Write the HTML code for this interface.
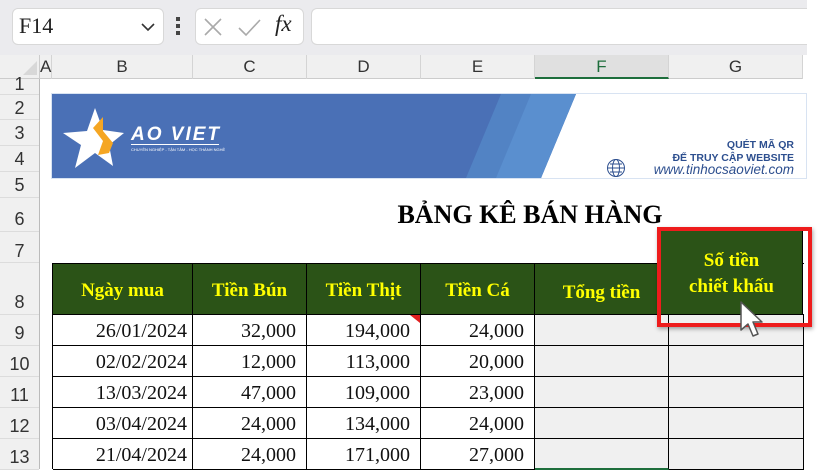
<!DOCTYPE html>
<html><head><meta charset="utf-8"><style>
*{margin:0;padding:0;box-sizing:border-box}
body{width:820px;height:469px;overflow:hidden;background:#fff;position:relative;font-family:"Liberation Sans",sans-serif}
.a{position:absolute}
.rh{position:absolute;left:0;width:39px;text-align:center;color:#333;font-size:18px;border-bottom:1px solid #dcdcdc;background:#f0f0f0}
.ch{position:absolute;top:55px;height:24px;text-align:center;font-size:17px;color:#333;line-height:24px;border-right:1px solid #d4d4d4}
.c{position:absolute;font-family:"Liberation Serif",serif;font-size:20px;color:#111;text-align:right;padding-right:10px;border-right:1px solid #000;border-bottom:1px solid #000;line-height:33px}
.h{position:absolute;background:#2b5317;color:#ffff00;font-family:"Liberation Serif",serif;font-weight:bold;font-size:19px;text-align:center;border-right:1px solid #000}
</style></head><body>
<div class="a" style="left:0;top:0;width:820px;height:55px;background:#ebebee"></div>
<div class="a" style="left:12px;top:8px;width:152px;height:37px;background:#fff;border:1px solid #d8d8d8;border-radius:6px"></div>
<div class="a" style="left:19px;top:13px;font-family:'Liberation Serif',serif;font-size:22px;color:#222">F14</div>
<svg class="a" style="left:141px;top:22px" width="14" height="10"><path d="M1 2 L7 8 L13 2" stroke="#333" stroke-width="1.6" fill="none"/></svg>
<div class="a" style="left:176px;top:17px;width:4px;height:4px;background:#444"></div>
<div class="a" style="left:176px;top:24px;width:4px;height:4px;background:#444"></div>
<div class="a" style="left:176px;top:31px;width:4px;height:4px;background:#444"></div>
<div class="a" style="left:195px;top:8px;width:109px;height:37px;background:#fff;border:1px solid #d8d8d8;border-radius:6px"></div>
<svg class="a" style="left:203px;top:16px" width="60" height="22"><path d="M2 3 L18 19 M18 3 L2 19" stroke="#aaa" stroke-width="1.6"/><path d="M36 12 L43 19 L57 4" stroke="#aaa" stroke-width="1.6" fill="none"/></svg>
<div class="a" style="left:275px;top:11px;font-family:'Liberation Serif',serif;font-style:italic;font-size:23px;color:#222">fx</div>
<div class="a" style="left:311px;top:8px;width:509px;height:37px;background:#fff;border:1px solid #d8d8d8;border-right:none;border-radius:6px 0 0 6px"></div>
<div class="a" style="left:807px;top:0;width:13px;height:55px;background:#fff"></div>
<div class="a" style="left:0;top:55px;width:807px;height:24px;background:#f0f0f0;border-bottom:1px solid #ccc"></div>
<svg class="a" style="left:22px;top:60px" width="16" height="16"><path d="M15 1 L15 15 L1 15 Z" fill="#d8d8d8"/></svg>
<div class="ch" style="left:39px;width:13px;border-left:1px solid #ccc">A</div>
<div class="ch" style="left:52px;width:141px">B</div>
<div class="ch" style="left:193px;width:114px">C</div>
<div class="ch" style="left:307px;width:114px">D</div>
<div class="ch" style="left:421px;width:114px">E</div>
<div class="ch" style="left:535px;width:134px;background:#e0e0e0;color:#1e6e3c;border-bottom:2px solid #1e6e3c">F</div>
<div class="ch" style="left:669px;width:134px">G</div>
<div class="a" style="left:803px;top:55px;width:17px;height:414px;background:#fff"></div>
<div class="a" style="left:39px;top:79px;width:1px;height:390px;background:#bbb"></div>
<div class="rh" style="top:79px;height:16px;line-height:10px">1</div>
<div class="rh" style="top:95px;height:25px;line-height:26px">2</div>
<div class="rh" style="top:120px;height:26px;line-height:26px">3</div>
<div class="rh" style="top:146px;height:26px;line-height:26px">4</div>
<div class="rh" style="top:172px;height:26px;line-height:26px">5</div>
<div class="rh" style="top:198px;height:34px;line-height:42px">6</div>
<div class="rh" style="top:232px;height:31px;line-height:38px">7</div>
<div class="rh" style="top:263px;height:52px;line-height:78px">8</div>
<div class="rh" style="top:315px;height:31px;line-height:36px">9</div>
<div class="rh" style="top:346px;height:31px;line-height:36px">10</div>
<div class="rh" style="top:377px;height:31px;line-height:36px">11</div>
<div class="rh" style="top:408px;height:31px;line-height:36px">12</div>
<div class="rh" style="top:439px;height:31px;line-height:36px">13</div>
<svg class="a" style="left:51px;top:93px" width="756" height="86">
<rect x="0" y="0" width="756" height="86" fill="#d8e3f2"/>
<rect x="1" y="1" width="754" height="84" fill="#fff"/>
<polygon points="1,1 525,1 490,85 1,85" fill="#4a70b6"/>
<polygon points="450,1 525,1 490,85 415,85" fill="#5283c4"/>
<polygon points="480,1 525,1 490,85 445,85" fill="#5a8fcf"/>
<polygon points="44,15 52,37 73,40 58,52 62,73 44,60 24,75 30,52 12,40 36,38" fill="#fff"/>
<path d="M52,24 L42,35 L52,48 L47,62 L58,60 L62,50 L52,38 Z" fill="#f5a623"/>
<text x="80" y="47" font-family="Liberation Sans" font-weight="bold" font-style="italic" font-size="19" fill="#fff" letter-spacing="2">AO VIET</text>
<rect x="80" y="51" width="88" height="1" fill="#fff"/>
<text x="80" y="58" font-family="Liberation Sans" font-size="4" fill="#fff">CHUYÊN NGHIỆP - TẬN TÂM - HỌC THÀNH NGHỀ</text>
<text x="743" y="55" text-anchor="end" font-family="Liberation Sans" font-weight="bold" font-size="10.5" fill="#2d4f8f">QUÉT MÃ QR</text>
<text x="743" y="68" text-anchor="end" font-family="Liberation Sans" font-weight="bold" font-size="10.5" fill="#2d4f8f">ĐỂ TRUY CẬP WEBSITE</text>
<text x="743" y="81" text-anchor="end" font-family="Liberation Sans" font-style="italic" font-size="13.5" fill="#2d4f8f">www.tinhocsaoviet.com</text>
<circle cx="565" cy="75" r="8.5" fill="none" stroke="#2d4f8f" stroke-width="1"/>
<ellipse cx="565" cy="75" rx="3.5" ry="8.5" fill="none" stroke="#2d4f8f" stroke-width="1"/>
<path d="M557 75 H573 M559 71 H571 M559 79 H571" stroke="#2d4f8f" stroke-width="1"/>
</svg>
<div class="a" style="left:280px;top:200px;width:500px;text-align:center;font-family:'Liberation Serif',serif;font-weight:bold;font-size:26px;color:#000">BẢNG KÊ BÁN HÀNG</div>
<div class="a" style="left:52px;top:263px;width:752px;height:1px;background:#000"></div>
<div class="a" style="left:52px;top:263px;width:1px;height:206px;background:#000"></div>
<div class="h" style="left:53px;top:264px;width:140px;height:51px;line-height:54px">Ngày mua</div>
<div class="h" style="left:193px;top:264px;width:114px;height:51px;line-height:54px">Tiền Bún</div>
<div class="h" style="left:307px;top:264px;width:114px;height:51px;line-height:54px">Tiền Thịt</div>
<div class="h" style="left:421px;top:264px;width:114px;height:51px;line-height:54px">Tiền Cá</div>
<div class="h" style="left:535px;top:264px;width:134px;height:51px;line-height:58px">Tổng tiền</div>
<div class="h" style="left:661px;top:231px;width:142px;height:84px;line-height:26px;padding-top:17px;border-right:1px solid #000">Số tiền<br>chiết khấu</div>
<div class="a" style="left:52px;top:314px;width:752px;height:1px;background:#000"></div>
<div class="c" style="left:53px;top:315px;width:140px;height:31px;padding-right:5px">26/01/2024</div>
<div class="c" style="left:193px;top:315px;width:114px;height:31px">32,000</div>
<div class="c" style="left:307px;top:315px;width:114px;height:31px">194,000</div>
<div class="c" style="left:421px;top:315px;width:114px;height:31px">24,000</div>
<div class="c" style="left:53px;top:346px;width:140px;height:31px;padding-right:5px">02/02/2024</div>
<div class="c" style="left:193px;top:346px;width:114px;height:31px">12,000</div>
<div class="c" style="left:307px;top:346px;width:114px;height:31px">113,000</div>
<div class="c" style="left:421px;top:346px;width:114px;height:31px">20,000</div>
<div class="c" style="left:53px;top:377px;width:140px;height:31px;padding-right:5px">13/03/2024</div>
<div class="c" style="left:193px;top:377px;width:114px;height:31px">47,000</div>
<div class="c" style="left:307px;top:377px;width:114px;height:31px">109,000</div>
<div class="c" style="left:421px;top:377px;width:114px;height:31px">23,000</div>
<div class="c" style="left:53px;top:408px;width:140px;height:31px;padding-right:5px">03/04/2024</div>
<div class="c" style="left:193px;top:408px;width:114px;height:31px">24,000</div>
<div class="c" style="left:307px;top:408px;width:114px;height:31px">134,000</div>
<div class="c" style="left:421px;top:408px;width:114px;height:31px">24,000</div>
<div class="c" style="left:53px;top:439px;width:140px;height:31px;padding-right:5px">21/04/2024</div>
<div class="c" style="left:193px;top:439px;width:114px;height:31px">24,000</div>
<div class="c" style="left:307px;top:439px;width:114px;height:31px">171,000</div>
<div class="c" style="left:421px;top:439px;width:114px;height:31px">27,000</div>
<div class="c" style="left:535px;top:315px;width:134px;height:31px;background:#f0f0f0"></div>
<div class="c" style="left:669px;top:315px;width:135px;height:31px;background:#f0f0f0"></div>
<div class="c" style="left:535px;top:346px;width:134px;height:31px;background:#f0f0f0"></div>
<div class="c" style="left:669px;top:346px;width:135px;height:31px;background:#f0f0f0"></div>
<div class="c" style="left:535px;top:377px;width:134px;height:31px;background:#f0f0f0"></div>
<div class="c" style="left:669px;top:377px;width:135px;height:31px;background:#f0f0f0"></div>
<div class="c" style="left:535px;top:408px;width:134px;height:31px;background:#f0f0f0"></div>
<div class="c" style="left:669px;top:408px;width:135px;height:31px;background:#f0f0f0"></div>
<div class="c" style="left:535px;top:439px;width:134px;height:31px;background:#f0f0f0;border-bottom:2px solid #1e6e3c"></div>
<div class="c" style="left:669px;top:439px;width:135px;height:31px;background:#f0f0f0"></div>
<svg class="a" style="left:410px;top:315px" width="10" height="8"><path d="M0 0 H10 V8 Z" fill="#e02020"/></svg>
<div class="a" style="left:657px;top:227px;width:155px;height:100px;border:4px solid #ee1c1c;box-shadow:1px 2px 4px rgba(0,0,0,.35)"></div>
<svg class="a" style="left:738px;top:300px" width="30" height="42"><path d="M3 2 L3 30 L10 24 L15 36 L20 34 L15 22 L24 22 Z" fill="#fff" stroke="#555" stroke-width="1.5" stroke-linejoin="round"/></svg>
</body></html>
